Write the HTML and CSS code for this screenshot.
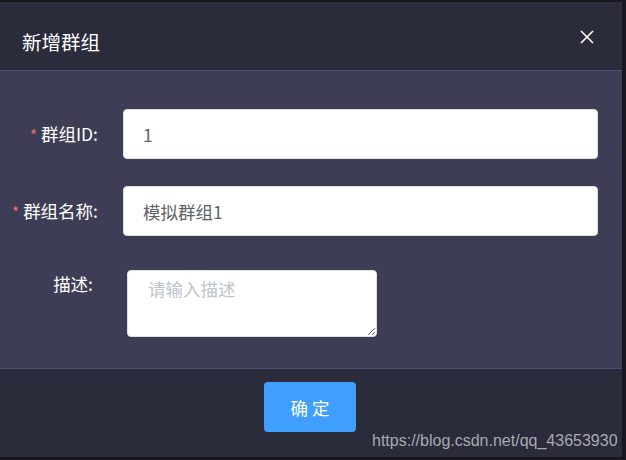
FILE: index.html
```html
<!DOCTYPE html>
<html lang="zh-CN">
<head>
<meta charset="utf-8">
<title>新增群组</title>
<link rel="stylesheet" href="styles.css">
</head>
<body>
<div class="dialog">
  <div class="dialog-header">
    <span class="dialog-title">新增群组</span>
    <button class="close-btn" type="button" aria-label="关闭">
      <svg width="14" height="14" viewBox="0 0 14 14"><path d="M1 1 L13 13 M13 1 L1 13" stroke="#ffffff" stroke-width="1.6" fill="none"/></svg>
    </button>
  </div>
  <div class="dialog-body">
    <div class="form-row">
      <label class="form-label"><span class="req">*</span>群组ID:</label>
      <input class="form-input" type="text" value="1">
    </div>
    <div class="form-row">
      <label class="form-label"><span class="req">*</span>群组名称:</label>
      <input class="form-input" type="text" value="模拟群组1">
    </div>
    <div class="form-row row-top">
      <label class="form-label label-top">描述:</label>
      <textarea class="form-textarea" placeholder="请输入描述"></textarea>
    </div>
  </div>
  <div class="dialog-footer">
    <button class="btn-primary" type="button">确 定</button>
  </div>
  <div class="watermark">https://blog.csdn.net/qq_43653930</div>
</div>
</body>
</html>
```

FILE: styles.css
```css
html, body {
  margin: 0;
  padding: 0;
  background: #17171f;
  width: 626px;
  height: 460px;
  overflow: hidden;
  font-family: "Noto Sans CJK SC", "Noto Sans", sans-serif;
}

.dialog {
  position: relative;
  margin-top: 2px;
  width: 622px;
  height: 455px;
  background: #2a2b3b;
  display: flex;
  flex-direction: column;
}

.dialog-header {
  height: 69px;
  box-sizing: border-box;
  padding: 0 28px 0 22px;
  display: flex;
  justify-content: space-between;
  align-items: flex-start;
  border-bottom: 1px solid #4b4f74;
}

.dialog-title {
  margin-top: 28px;
  font-size: 19.5px;
  line-height: 24px;
  color: #ffffff;
}

.close-btn {
  margin-top: 28px;
  padding: 0;
  border: 0;
  background: transparent;
  width: 14px;
  height: 14px;
  display: flex;
}

.dialog-body {
  background: #3d3e56;
  height: 298px;
  box-sizing: border-box;
  padding: 38px 24px 0 0;
  display: flex;
  flex-direction: column;
  gap: 27px;
  border-bottom: 1px solid #4b4f74;
}

.form-row {
  display: grid;
  grid-template-columns: 98px 1fr;
  column-gap: 25px;
  align-items: center;
}

.row-top {
  margin-top: 7px;
  align-items: start;
}

.form-label {
  text-align: right;
  color: #ffffff;
  font-size: 17.5px;
  line-height: 24px;
  white-space: nowrap;
}

.label-top {
  padding-top: 2px;
  padding-right: 5px;
}

.req {
  color: #f56c6c;
  font-size: 15px;
  margin-right: 4px;
}

.form-input {
  height: 50px;
  box-sizing: border-box;
  border: 1px solid #dcdfe6;
  border-radius: 4px;
  background: #ffffff;
  padding: 0 19px;
  font-family: inherit;
  font-size: 17.5px;
  color: #606266;
  outline: none;
  width: 100%;
}

.form-textarea {
  margin-left: 4px;
  width: 250px;
  height: 67px;
  box-sizing: border-box;
  border: 1px solid #dcdfe6;
  border-radius: 4px;
  background: #ffffff;
  padding: 6px 20px;
  font-family: inherit;
  font-size: 17.5px;
  line-height: 24px;
  color: #606266;
  outline: none;
  resize: both;
}

.form-textarea::placeholder {
  color: #c0c4cc;
}

.dialog-footer {
  flex: 1;
  display: flex;
  justify-content: center;
  align-items: flex-start;
  padding-top: 13px;
  padding-right: 2px;
}

.btn-primary {
  width: 92px;
  height: 50px;
  border: 0;
  border-radius: 4px;
  background: #409eff;
  color: #ffffff;
  font-family: inherit;
  font-size: 17.5px;
  padding: 0;
}

.watermark {
  position: absolute;
  left: 372px;
  top: 429px;
  font-family: "Liberation Sans", Arial, sans-serif;
  font-size: 16px;
  line-height: 20px;
  color: #a9a9af;
  white-space: nowrap;
}
```
